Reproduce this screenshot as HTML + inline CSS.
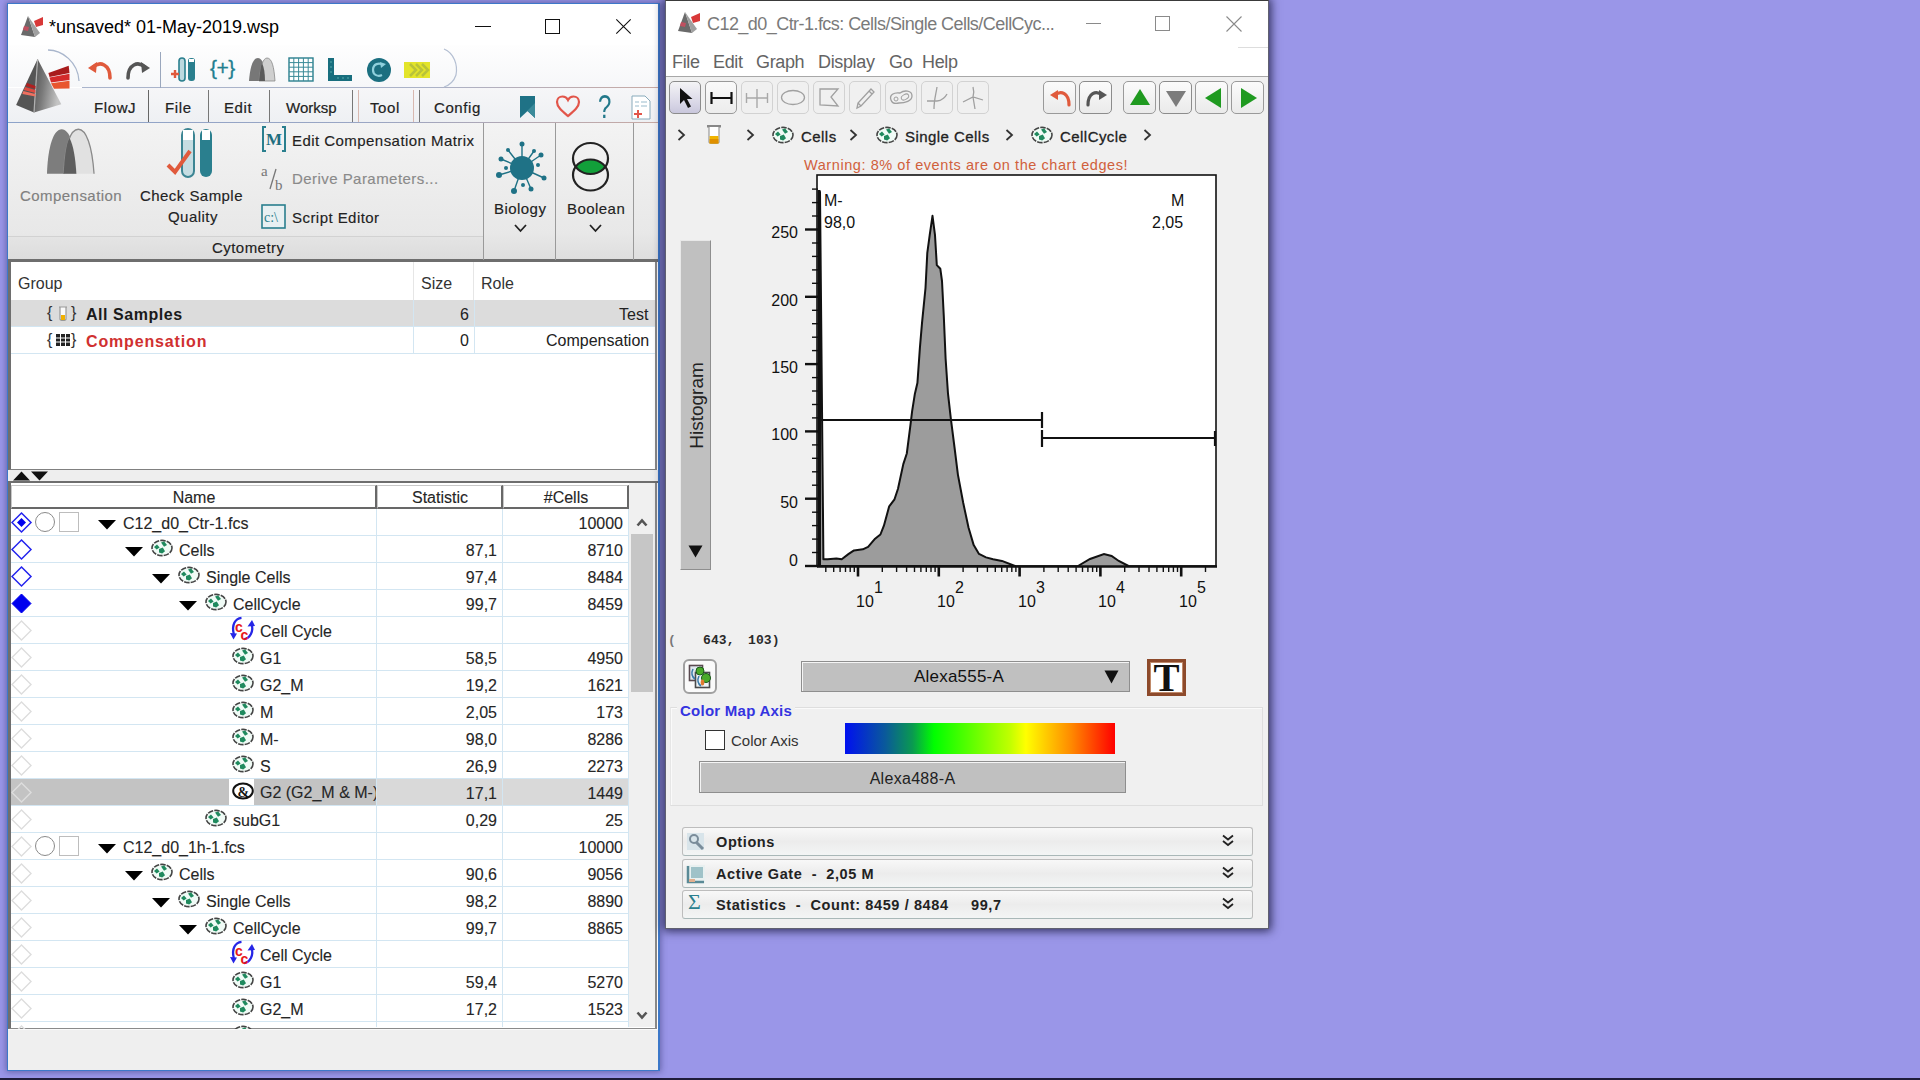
<!DOCTYPE html>
<html><head><meta charset="utf-8">
<style>
*{box-sizing:border-box;margin:0;padding:0}
html,body{width:1920px;height:1080px;overflow:hidden}
body{background:#9a96e8;font-family:"Liberation Sans",sans-serif;position:relative;color:#1e1e1e}
.a{position:absolute}
.t{position:absolute;white-space:nowrap;line-height:1}
svg{position:absolute;overflow:visible}
#taskbar{left:0;top:1078px;width:1920px;height:2px;background:#1f1d3a}
#lw{left:7px;top:3px;width:653px;height:1068px;border:1px solid #3d78c9;border-right-width:2px;background:#fff;box-shadow:0 0 6px 1px rgba(40,40,90,.45)}
#rw{left:665px;top:0px;width:604px;height:929px;border:1px solid #606070;border-top-color:#3a3a3a;background:#f0f0f0;box-shadow:0 0 9px 2px rgba(20,20,55,.8)}
.tb{font-size:18px;color:#000}
.tab{font-size:15px;color:#222;top:100px;letter-spacing:0.6px;-webkit-text-stroke:0.2px #222}
.rib{font-size:15px;color:#222;letter-spacing:0.45px;-webkit-text-stroke:0.15px currentColor}
.gh{font-size:16px;color:#333}
.row{position:absolute;left:11px;width:617px;height:27px;border-bottom:1px solid #d3e6f2}
.nm{font-size:16px;color:#262626;-webkit-text-stroke:0.12px #262626}
.num{font-size:16px;color:#262626;text-align:right;-webkit-text-stroke:0.12px #262626}
.rm{font-size:18px;color:#646464;letter-spacing:-0.35px}
.bc{font-size:15px;color:#222;letter-spacing:0.45px;-webkit-text-stroke:0.3px #222}
.ax{font-size:16px;color:#111}
.mono{font-family:'Liberation Mono',monospace;font-size:13px;color:#2a2a2a;font-weight:bold;letter-spacing:0.1px}
</style></head><body>
<div id="taskbar" class="a"></div>

<!-- ============ LEFT WINDOW ============ -->
<div id="lw" class="a"></div>
<!-- title bar -->
<svg style="left:21px;top:15px" width="24" height="22" viewBox="0 0 24 22">
 <g style="filter:blur(0.35px)"><polygon points="7,1 0,20 14,22" fill="#6a6a6a"/><polygon points="7,1 14,22 19,18" fill="#a0a0a0"/>
 <polygon points="13,6 22,2 22,10 15,12" fill="#d83838"/><polygon points="3,11 8,12 7,16 2,15" fill="#c05060"/></g>
</svg>
<div class="t tb" style="left:49px;top:18px">*unsaved* 01-May-2019.wsp</div>
<div class="a" style="left:475px;top:26px;width:16px;height:1px;background:#111"></div>
<div class="a" style="left:545px;top:19px;width:15px;height:15px;border:1px solid #111"></div>
<svg style="left:616px;top:19px" width="15" height="15"><path d="M0.3,0.3 L14.7,14.7 M14.7,0.3 L0.3,14.7" stroke="#111" stroke-width="1.1"/></svg>

<!-- quick access bar -->
<div class="a" style="left:8px;top:45px;width:650px;height:42px;background:linear-gradient(#fefefe,#f6f7f9)"></div>
<div class="a" style="left:82px;top:87px;width:576px;height:1px;background:linear-gradient(90deg,#a9b4cc,#aab2c8 60%,#c8aaa4)"></div>
<div class="a" style="left:8px;top:88px;width:650px;height:34px;background:linear-gradient(#f6f6f8,#eef0f3)"></div>
<div class="a" style="left:8px;top:122px;width:650px;height:1px;background:linear-gradient(90deg,#8da3c9,#9aa6c4 55%,#c8aaa4)"></div>

<!-- big logo + quick access pill -->
<svg style="left:8px;top:45px" width="460" height="78" viewBox="0 0 460 78">
 <path d="M40,5 C54,5 70,17 71,36" stroke="#a9b6cc" stroke-width="1.3" fill="none"/>
 <path d="M436,4 C446,8 450,20 448,30 C446,36 442,40 436,42" stroke="#b4bfd2" stroke-width="1.2" fill="none"/>
</svg>
<svg style="left:8px;top:45px" width="80" height="80" viewBox="0 0 80 80">
 <defs><linearGradient id="pyr" x1="0" x2="1" y1="0" y2="0.3"><stop offset="0" stop-color="#505050"/><stop offset=".45" stop-color="#7a7a7a"/><stop offset="1" stop-color="#c4c4c4"/></linearGradient></defs>
 <polygon points="29.6,14 8.1,60 26,67.4" fill="#555"/>
 <polygon points="29.6,14 26,67.4 53.3,59.3" fill="url(#pyr)"/>
 <line x1="29.6" y1="14" x2="26" y2="67.4" stroke="#b0b0b0" stroke-width="1.2"/>
 <polygon points="40.4,28 60.7,20.7 61.5,28.1 41.5,31.9" fill="#a81c1c"/>
 <polygon points="41.5,32.6 61.5,28.8 61.5,35 43,37.5" fill="#d42a2a"/>
 <polygon points="43,38.2 61.5,35.7 61.5,43.5 46,43.7" fill="#e8552e"/>
 <polygon points="19,38 27.6,41 27.4,44 17.6,41" fill="#b02020"/>
 <polygon points="17.2,42 27.4,45 27.4,48 15.8,45" fill="#e04a40"/>
 <polygon points="15.4,46 27.4,49 27.4,51.5 14.3,49" fill="#f07060"/>
</svg>
<!-- undo / redo -->
<svg style="left:86px;top:58px" width="28" height="24" viewBox="0 0 28 24"><path d="M7,9 C14,3 24,6 24,20" stroke="#e05a3c" stroke-width="3.6" fill="none" stroke-linecap="round"/><polygon points="2,10 11,4 10,15" fill="#e05a3c"/></svg>
<svg style="left:124px;top:58px" width="28" height="24" viewBox="0 0 28 24"><path d="M21,9 C14,3 4,6 4,20" stroke="#555" stroke-width="3.6" fill="none" stroke-linecap="round"/><polygon points="26,10 17,4 18,15" fill="#555"/></svg>
<div class="a" style="left:160px;top:52px;width:1px;height:36px;background:#9aa7bd"></div>
<!-- toolbar icons -->
<svg style="left:170px;top:57px" width="28" height="26" viewBox="0 0 28 26"><rect x="9" y="1" width="6" height="23" rx="3" fill="#bcd9df" stroke="#2a7f8e" stroke-width="1.6"/><rect x="18" y="1" width="7" height="23" rx="3" fill="#2a7f8e"/><rect x="19" y="2" width="5" height="3" fill="#fff"/><path d="M1,17 H9 M5,13 V21" stroke="#e05a3c" stroke-width="2.4"/></svg>
<div class="t" style="left:210px;top:57px;font-size:21px;color:#1f7f90;letter-spacing:-0.5px;-webkit-text-stroke:0.3px #1f7f90">{+}</div>
<svg style="left:248px;top:57px" width="28" height="25" viewBox="0 0 28 25"><path d="M1,24 C2,10 5,1 10,1 C15,1 17,10 17,24Z" fill="#777"/><path d="M11,24 C12,10 15,1 19,1 C24,1 26,10 27,24Z" fill="#cfcfcf" stroke="#888" stroke-width="0.8"/><path d="M11,24 C12,14 13,8 14,6 C16,10 17,16 17,24Z" fill="#5b5b5b"/></svg>
<svg style="left:288px;top:57px" width="26" height="25" viewBox="0 0 26 25"><rect x="1" y="1" width="24" height="23" fill="#fff" stroke="#2a7f8e" stroke-width="1.4"/><path d="M1,5.6 H25 M1,10.2 H25 M1,14.8 H25 M1,19.4 H25 M5.8,1 V24 M10.6,1 V24 M15.4,1 V24 M20.2,1 V24" stroke="#3a8a98" stroke-width="1"/></svg>
<svg style="left:327px;top:57px" width="26" height="25" viewBox="0 0 26 25"><path d="M1,1 H7 V18 H25 V24 H1Z" fill="#186e7e"/><path d="M4,4 V6 M4,9 V11 M4,14 V16 M10,21 H12 M15,21 H17 M20,21 H22" stroke="#5aa" stroke-width="1"/></svg>
<svg style="left:366px;top:57px" width="26" height="26" viewBox="0 0 26 26"><circle cx="13" cy="13" r="12" fill="#1b6f80"/><path d="M17,8 C13,5 7,7 7,13 C7,18 12,20 16,18" stroke="#8fd0dc" stroke-width="2.2" fill="none"/><polygon points="14,5 20,7 15,11" fill="#8fd0dc"/></svg>
<svg style="left:404px;top:61px" width="28" height="18" viewBox="0 0 28 18"><rect x="0" y="1" width="26" height="16" fill="#e3e42a"/><path d="M6,3 L12,9 L6,15 M12,3 L18,9 L12,15 M18,3 L24,9 L18,15" stroke="#b9c33a" stroke-width="2.5" fill="none"/></svg>

<!-- tabs -->
<div class="t tab" style="left:94px">FlowJ</div>
<div class="a" style="left:148px;top:90px;width:1px;height:32px;background:#666"></div>
<div class="t tab" style="left:165px">File</div>
<div class="a" style="left:208px;top:90px;width:1px;height:32px;background:#777"></div>
<div class="t tab" style="left:224px">Edit</div>
<div class="a" style="left:269px;top:90px;width:1px;height:32px;background:#777"></div>
<div class="t tab" style="left:286px;letter-spacing:0">Worksp</div>
<div class="a" style="left:352px;top:90px;width:1px;height:32px;background:#777"></div>
<div class="a" style="left:358px;top:90px;width:1px;height:32px;background:#d8b8b0"></div>
<div class="t tab" style="left:370px">Tool</div>
<div class="a" style="left:413px;top:90px;width:1px;height:32px;background:#d8b8b0"></div>
<div class="a" style="left:419px;top:90px;width:1px;height:32px;background:#777"></div>
<div class="t tab" style="left:434px">Config</div>
<svg style="left:519px;top:95px" width="18" height="24" viewBox="0 0 18 24"><polygon points="1,1 16,1 16,23 8.5,16 1,23" fill="#1f7286"/><polygon points="1,23 16,8 16,23 8.5,16" fill="#3b8a9a"/></svg>
<svg style="left:555px;top:95px" width="26" height="24" viewBox="0 0 26 24"><path d="M13,21 C7,16 2,12 2,7 C2,3.5 4.5,1.5 7.5,1.5 C10,1.5 12,3 13,5 C14,3 16,1.5 18.5,1.5 C21.5,1.5 24,3.5 24,7 C24,12 19,16 13,21Z" fill="none" stroke="#e2554a" stroke-width="2.2"/></svg>
<div class="t" style="left:598px;top:90px;font-size:30px;color:#22788a;transform:scale(0.8,1.12);transform-origin:0 0">?</div>
<svg style="left:630px;top:95px" width="22" height="26" viewBox="0 0 22 26"><path d="M2,1 H15 L20,6 V24 H2Z" fill="#fff" stroke="#8ab" stroke-width="1"/><path d="M5,7 H9 M11,7 H17 M5,11 H9 M11,11 H17" stroke="#9bc" stroke-width="1"/><path d="M4,19 H12 M8,15 V23" stroke="#e2554a" stroke-width="2"/></svg>

<!-- ribbon body -->
<div class="a" style="left:8px;top:123px;width:650px;height:137px;background:linear-gradient(#f3f3f3,#e8e8e8 80%,#dedede)"></div>
<div class="a" style="left:8px;top:236px;width:475px;height:1px;background:#d2d2d2"></div>
<div class="a" style="left:8px;top:237px;width:475px;height:23px;background:linear-gradient(#e4e4e4,#dcdcdc)"></div>
<div class="a" style="left:8px;top:123px;width:650px;height:137px;background:transparent"></div>
<div class="a" style="left:8px;top:259px;width:650px;height:3px;background:#6e6e6e"></div>
<div class="a" style="left:483px;top:123px;width:1px;height:137px;background:#9a9a9a"></div>
<div class="a" style="left:555px;top:123px;width:1px;height:137px;background:#9a9a9a"></div>
<div class="a" style="left:633px;top:123px;width:1px;height:137px;background:#9a9a9a"></div>
<!-- compensation -->
<svg style="left:45px;top:128px" width="51" height="47" viewBox="0 0 52 38" preserveAspectRatio="none"><path d="M2,37 C3,14 9,1 17,1 C25,1 31,14 32,37Z" fill="#7d7d7d"/><path d="M19,37 C20,14 26,1 34,1 C42,1 48,14 50,37" fill="#e1e1e1" stroke="#8a8a8a" stroke-width="1.3"/><path d="M19,37 C20,22 22,12 25,8 C29,14 31,24 32,37Z" fill="#5e5e5e"/></svg>
<div class="t rib" style="left:20px;top:188px;color:#808080">Compensation</div>
<!-- check sample quality -->
<svg style="left:166px;top:127px" width="50" height="54" viewBox="0 0 50 54"><rect x="16" y="2" width="12" height="48" rx="6" fill="#c6dde2" stroke="#3c8593" stroke-width="2"/><rect x="17" y="3" width="10" height="10" fill="#fff"/><rect x="34" y="2" width="12" height="48" rx="6" fill="#2a7f8e"/><rect x="36" y="3" width="8" height="10" fill="#fff"/><path d="M2,38 L9,45 L24,24" stroke="#e05a3c" stroke-width="4" fill="none"/></svg>
<div class="t rib" style="left:140px;top:188px">Check Sample</div>
<div class="t rib" style="left:168px;top:209px">Quality</div>
<!-- small buttons -->
<svg style="left:261px;top:126px" width="26" height="26" viewBox="0 0 26 26"><path d="M5,1 H2 V25 H5 M21,1 H24 V25 H21" stroke="#2a7f8e" stroke-width="2" fill="none"/><text x="13" y="19" text-anchor="middle" font-family="Liberation Serif" font-weight="bold" font-size="17" fill="#1f6f80">M</text></svg>
<div class="t rib" style="left:292px;top:133px">Edit Compensation Matrix</div>
<svg style="left:260px;top:163px" width="28" height="30" viewBox="0 0 28 30"><text x="1" y="13" font-family="Liberation Serif" font-size="15" fill="#777">a</text><path d="M16,6 L10,26" stroke="#777" stroke-width="1.3"/><text x="15" y="27" font-family="Liberation Serif" font-size="15" fill="#777">b</text></svg>
<div class="t rib" style="left:292px;top:171px;color:#8a8a8a">Derive Parameters...</div>
<svg style="left:261px;top:204px" width="26" height="26" viewBox="0 0 26 26"><rect x="1" y="1" width="23" height="23" fill="#e8f0f2" stroke="#2a7f8e" stroke-width="1.6"/><text x="3" y="18" font-family="Liberation Serif" font-size="14" fill="#2a7f8e">c:\</text></svg>
<div class="t rib" style="left:292px;top:210px">Script Editor</div>
<div class="t rib" style="left:212px;top:240px">Cytometry</div>
<!-- biology -->
<svg style="left:494px;top:141px" width="56" height="54" viewBox="0 0 56 54">
 <g stroke="#1f7286" stroke-width="1.4">
 <path d="M28,27 L28,3 M28,27 L7,18 M28,27 L47,14 M28,27 L5,34 M28,27 L50,37 M28,27 L20,50 M28,27 L37,48 M28,27 L40,10 M28,27 L14,9"/></g>
 <g fill="#1f7286"><circle cx="28" cy="27" r="12"/><circle cx="28" cy="3" r="2.5"/><circle cx="7" cy="18" r="2.5"/><circle cx="47" cy="14" r="2.5"/><circle cx="5" cy="34" r="3"/><circle cx="50" cy="37" r="2.5"/><circle cx="20" cy="50" r="3"/><circle cx="37" cy="48" r="2.5"/><circle cx="40" cy="10" r="2"/><circle cx="14" cy="9" r="2"/><circle cx="44" cy="24" r="2"/><circle cx="12" cy="27" r="2"/><circle cx="29" cy="44" r="2"/></g>
</svg>
<div class="t rib" style="left:494px;top:201px">Biology</div>
<svg style="left:514px;top:224px" width="13" height="9"><path d="M1,1 L6.5,7 L12,1" stroke="#222" stroke-width="1.8" fill="none"/></svg>
<!-- boolean -->
<svg style="left:569px;top:141px" width="44" height="52" viewBox="0 0 44 52"><path d="M6.7,25.75 A17.5,15.5 0 0 1 36.3,25.75 A17.5,15.5 0 0 1 6.7,25.75Z" fill="#12a03a"/><ellipse cx="21.5" cy="17.5" rx="17.5" ry="15.5" fill="none" stroke="#222" stroke-width="2.2"/><ellipse cx="21.5" cy="34" rx="17.5" ry="15.5" fill="none" stroke="#222" stroke-width="2.2"/></svg>
<div class="t rib" style="left:567px;top:201px">Boolean</div>
<svg style="left:589px;top:224px" width="13" height="9"><path d="M1,1 L6.5,7 L12,1" stroke="#222" stroke-width="1.8" fill="none"/></svg>


<!-- group table -->
<div class="a" style="left:8px;top:262px;width:649px;height:208px;background:#fff;border-left:3px solid #6e6e6e;border-right:2px solid #888;border-bottom:1px solid #808080"></div>
<div class="a" style="left:11px;top:300px;width:644px;height:26px;background:#dcdcdc"></div>
<div class="a" style="left:11px;top:326px;width:644px;height:1px;background:#d3e6f2"></div>
<div class="a" style="left:11px;top:353px;width:644px;height:1px;background:#d3e6f2"></div>
<div class="a" style="left:413px;top:262px;width:1px;height:38px;background:#e6e6e6"></div>
<div class="a" style="left:473px;top:262px;width:1px;height:38px;background:#e6e6e6"></div>
<div class="a" style="left:413px;top:300px;width:1px;height:53px;background:#d3e6f2"></div>
<div class="a" style="left:474px;top:300px;width:1px;height:53px;background:#d3e6f2"></div>
<div class="t gh" style="left:18px;top:276px">Group</div>
<div class="t gh" style="left:421px;top:276px">Size</div>
<div class="t gh" style="left:481px;top:276px">Role</div>
<div class="t gh" style="left:47px;top:305px;color:#333">{</div>
<svg style="left:57px;top:306px" width="12" height="16" viewBox="0 0 12 16"><path d="M2,1 H10 M3,1 V13 C3,15 9,15 9,13 V1" stroke="#999" stroke-width="1.2" fill="#fafafa"/><rect x="4" y="9" width="4" height="5" fill="#f0b000"/></svg>
<div class="t gh" style="left:71px;top:305px;color:#333">}</div>
<div class="t" style="left:86px;top:307px;font-size:16px;font-weight:bold;color:#1a1a1a;letter-spacing:0.55px">All Samples</div>
<div class="t gh" style="left:460px;top:307px;color:#222">6</div>
<div class="t gh" style="left:619px;top:307px;color:#222">Test</div>
<div class="t gh" style="left:47px;top:332px;color:#333">{</div>
<svg style="left:55px;top:333px" width="16" height="14" viewBox="0 0 16 14"><rect x="1" y="1" width="14" height="12" fill="#222"/><path d="M1,5 H15 M1,9 H15 M5.5,1 V13 M10.5,1 V13" stroke="#fff" stroke-width="1"/></svg>
<div class="t gh" style="left:71px;top:332px;color:#333">}</div>
<div class="t" style="left:86px;top:334px;font-size:16px;font-weight:bold;color:#d03030;letter-spacing:0.85px">Compensation</div>
<div class="t gh" style="left:460px;top:333px;color:#222">0</div>
<div class="t gh" style="left:546px;top:333px;color:#222">Compensation</div>

<!-- splitter -->
<div class="a" style="left:8px;top:470px;width:650px;height:11px;background:#eeeeee"></div>
<svg style="left:13px;top:471px" width="36" height="10" viewBox="0 0 36 10"><polygon points="0,9.5 8.5,0.5 17,9.5" fill="#111"/><polygon points="18,0.5 35,0.5 26.5,9.5" fill="#111"/></svg>
<div class="a" style="left:8px;top:481px;width:650px;height:2px;background:#6e6e6e"></div>

<!-- tree table -->
<div class="a" style="left:8px;top:483px;width:649px;height:546px;background:#fff;border-left:3px solid #6e6e6e;border-right:2px solid #888;border-bottom:1px solid #8a8a8a"></div>

<div class="a hdr" style="left:11px;top:485px;width:366px;height:24px;border-left:1px solid #c8c8c8;border-top:1px solid #c8c8c8;border-right:2px solid #686868;border-bottom:2px solid #686868"></div>
<div class="t nm" style="left:11px;width:366px;text-align:center;top:490px">Name</div>
<div class="a hdr" style="left:377px;top:485px;width:126px;height:24px;border-left:1px solid #c8c8c8;border-top:1px solid #c8c8c8;border-right:2px solid #686868;border-bottom:2px solid #686868"></div>
<div class="t nm" style="left:377px;width:126px;text-align:center;top:490px">Statistic</div>
<div class="a hdr" style="left:503px;top:485px;width:126px;height:24px;border-left:1px solid #c8c8c8;border-top:1px solid #c8c8c8;border-right:2px solid #686868;border-bottom:2px solid #686868"></div>
<div class="t nm" style="left:503px;width:126px;text-align:center;top:490px">#Cells</div>
<div class="a" style="left:11px;top:535px;width:617px;height:1px;background:#d3e6f2"></div>
<svg style="left:11px;top:512px" width="21" height="21" viewBox="0 0 21 21"><polygon points="10.5,1 20,10.5 10.5,20 1,10.5" fill="#fff" stroke="#2424ee" stroke-width="1.5"/><polygon points="10.5,6 15,10.5 10.5,15 6,10.5" fill="#0000ee"/></svg>
<div class="a" style="left:35px;top:512px;width:20px;height:20px;border:1.5px solid #8a8a8a;border-radius:50%"></div>
<div class="a" style="left:59px;top:512px;width:20px;height:20px;border:1px solid #bdbdbd"></div>
<svg style="left:98px;top:520px" width="18" height="10" viewBox="0 0 18 10"><polygon points="0,0 18,0 9,9.5" fill="#000"/></svg>
<div class="t nm" style="left:123px;top:516px">C12_d0_Ctr-1.fcs</div>
<div class="t num" style="left:503px;width:120px;top:516px">10000</div>
<div class="a" style="left:11px;top:562px;width:617px;height:1px;background:#d3e6f2"></div>
<svg style="left:11px;top:539px" width="21" height="21" viewBox="0 0 21 21"><polygon points="10.5,1 20,10.5 10.5,20 1,10.5" fill="#fff" stroke="#2424ee" stroke-width="1.5"/></svg>
<svg style="left:125px;top:547px" width="18" height="10" viewBox="0 0 18 10"><polygon points="0,0 18,0 9,9.5" fill="#000"/></svg>
<svg style="left:151px;top:539px" width="22" height="18" viewBox="0 0 22 18"><ellipse cx="11" cy="9" rx="10" ry="7.6" fill="#f0fbf6" stroke="#444" stroke-width="1.6" stroke-dasharray="5.5 1.1"/><path d="M3,8 L6,5.6 L8.6,8.4 L5.6,10.6Z" fill="#1f8a5e"/><path d="M10,3.4 L13.2,2.4 L16,6 L13,7.8Z" fill="#1f8a5e"/><path d="M8,10 L11.8,8.4 L14,12.2 L11.2,14.6 L8,13.4Z" fill="#1f8a5e"/></svg>
<div class="t nm" style="left:179px;top:543px">Cells</div>
<div class="t num" style="left:377px;width:120px;top:543px">87,1</div>
<div class="t num" style="left:503px;width:120px;top:543px">8710</div>
<div class="a" style="left:11px;top:589px;width:617px;height:1px;background:#d3e6f2"></div>
<svg style="left:11px;top:566px" width="21" height="21" viewBox="0 0 21 21"><polygon points="10.5,1 20,10.5 10.5,20 1,10.5" fill="#fff" stroke="#2424ee" stroke-width="1.5"/></svg>
<svg style="left:152px;top:574px" width="18" height="10" viewBox="0 0 18 10"><polygon points="0,0 18,0 9,9.5" fill="#000"/></svg>
<svg style="left:178px;top:566px" width="22" height="18" viewBox="0 0 22 18"><ellipse cx="11" cy="9" rx="10" ry="7.6" fill="#f0fbf6" stroke="#444" stroke-width="1.6" stroke-dasharray="5.5 1.1"/><path d="M3,8 L6,5.6 L8.6,8.4 L5.6,10.6Z" fill="#1f8a5e"/><path d="M10,3.4 L13.2,2.4 L16,6 L13,7.8Z" fill="#1f8a5e"/><path d="M8,10 L11.8,8.4 L14,12.2 L11.2,14.6 L8,13.4Z" fill="#1f8a5e"/></svg>
<div class="t nm" style="left:206px;top:570px">Single Cells</div>
<div class="t num" style="left:377px;width:120px;top:570px">97,4</div>
<div class="t num" style="left:503px;width:120px;top:570px">8484</div>
<div class="a" style="left:11px;top:616px;width:617px;height:1px;background:#d3e6f2"></div>
<svg style="left:11px;top:593px" width="21" height="21" viewBox="0 0 21 21"><polygon points="10.5,1 20,10.5 10.5,20 1,10.5" fill="#0000ee" stroke="#0000ee" stroke-width="1"/></svg>
<svg style="left:179px;top:601px" width="18" height="10" viewBox="0 0 18 10"><polygon points="0,0 18,0 9,9.5" fill="#000"/></svg>
<svg style="left:205px;top:593px" width="22" height="18" viewBox="0 0 22 18"><ellipse cx="11" cy="9" rx="10" ry="7.6" fill="#f0fbf6" stroke="#444" stroke-width="1.6" stroke-dasharray="5.5 1.1"/><path d="M3,8 L6,5.6 L8.6,8.4 L5.6,10.6Z" fill="#1f8a5e"/><path d="M10,3.4 L13.2,2.4 L16,6 L13,7.8Z" fill="#1f8a5e"/><path d="M8,10 L11.8,8.4 L14,12.2 L11.2,14.6 L8,13.4Z" fill="#1f8a5e"/></svg>
<div class="t nm" style="left:233px;top:597px">CellCycle</div>
<div class="t num" style="left:377px;width:120px;top:597px">99,7</div>
<div class="t num" style="left:503px;width:120px;top:597px">8459</div>
<div class="a" style="left:11px;top:643px;width:617px;height:1px;background:#d3e6f2"></div>
<svg style="left:11px;top:620px" width="21" height="21" viewBox="0 0 21 21"><polygon points="10.5,1 20,10.5 10.5,20 1,10.5" fill="none" stroke="#dddddd" stroke-width="1.4"/></svg>
<svg style="left:230px;top:616px" width="25" height="25" viewBox="0 0 25 25"><path d="M11.5,1.8 C5,2.5 1.5,9 3.8,18" stroke="#2626e6" stroke-width="2.3" fill="none"/><polygon points="0,17 7,17.5 3.5,23.5" fill="#2626e6"/><path d="M14,23.2 C20,22.5 24,15 21.5,8" stroke="#2626e6" stroke-width="2.3" fill="none"/><polygon points="17.5,10.5 25,10 22,4" fill="#2626e6"/><text x="5" y="15.5" font-family="Liberation Sans" font-weight="bold" font-size="14" fill="#e81818">c</text><text x="10.5" y="23.5" font-family="Liberation Sans" font-weight="bold" font-size="14" fill="#e81818">c</text></svg>
<div class="t nm" style="left:260px;top:624px">Cell Cycle</div>
<div class="a" style="left:11px;top:670px;width:617px;height:1px;background:#d3e6f2"></div>
<svg style="left:11px;top:647px" width="21" height="21" viewBox="0 0 21 21"><polygon points="10.5,1 20,10.5 10.5,20 1,10.5" fill="none" stroke="#dddddd" stroke-width="1.4"/></svg>
<svg style="left:232px;top:647px" width="22" height="18" viewBox="0 0 22 18"><ellipse cx="11" cy="9" rx="10" ry="7.6" fill="#f0fbf6" stroke="#444" stroke-width="1.6" stroke-dasharray="5.5 1.1"/><path d="M3,8 L6,5.6 L8.6,8.4 L5.6,10.6Z" fill="#1f8a5e"/><path d="M10,3.4 L13.2,2.4 L16,6 L13,7.8Z" fill="#1f8a5e"/><path d="M8,10 L11.8,8.4 L14,12.2 L11.2,14.6 L8,13.4Z" fill="#1f8a5e"/></svg>
<div class="t nm" style="left:260px;top:651px">G1</div>
<div class="t num" style="left:377px;width:120px;top:651px">58,5</div>
<div class="t num" style="left:503px;width:120px;top:651px">4950</div>
<div class="a" style="left:11px;top:697px;width:617px;height:1px;background:#d3e6f2"></div>
<svg style="left:11px;top:674px" width="21" height="21" viewBox="0 0 21 21"><polygon points="10.5,1 20,10.5 10.5,20 1,10.5" fill="none" stroke="#dddddd" stroke-width="1.4"/></svg>
<svg style="left:232px;top:674px" width="22" height="18" viewBox="0 0 22 18"><ellipse cx="11" cy="9" rx="10" ry="7.6" fill="#f0fbf6" stroke="#444" stroke-width="1.6" stroke-dasharray="5.5 1.1"/><path d="M3,8 L6,5.6 L8.6,8.4 L5.6,10.6Z" fill="#1f8a5e"/><path d="M10,3.4 L13.2,2.4 L16,6 L13,7.8Z" fill="#1f8a5e"/><path d="M8,10 L11.8,8.4 L14,12.2 L11.2,14.6 L8,13.4Z" fill="#1f8a5e"/></svg>
<div class="t nm" style="left:260px;top:678px">G2_M</div>
<div class="t num" style="left:377px;width:120px;top:678px">19,2</div>
<div class="t num" style="left:503px;width:120px;top:678px">1621</div>
<div class="a" style="left:11px;top:724px;width:617px;height:1px;background:#d3e6f2"></div>
<svg style="left:11px;top:701px" width="21" height="21" viewBox="0 0 21 21"><polygon points="10.5,1 20,10.5 10.5,20 1,10.5" fill="none" stroke="#dddddd" stroke-width="1.4"/></svg>
<svg style="left:232px;top:701px" width="22" height="18" viewBox="0 0 22 18"><ellipse cx="11" cy="9" rx="10" ry="7.6" fill="#f0fbf6" stroke="#444" stroke-width="1.6" stroke-dasharray="5.5 1.1"/><path d="M3,8 L6,5.6 L8.6,8.4 L5.6,10.6Z" fill="#1f8a5e"/><path d="M10,3.4 L13.2,2.4 L16,6 L13,7.8Z" fill="#1f8a5e"/><path d="M8,10 L11.8,8.4 L14,12.2 L11.2,14.6 L8,13.4Z" fill="#1f8a5e"/></svg>
<div class="t nm" style="left:260px;top:705px">M</div>
<div class="t num" style="left:377px;width:120px;top:705px">2,05</div>
<div class="t num" style="left:503px;width:120px;top:705px">173</div>
<div class="a" style="left:11px;top:751px;width:617px;height:1px;background:#d3e6f2"></div>
<svg style="left:11px;top:728px" width="21" height="21" viewBox="0 0 21 21"><polygon points="10.5,1 20,10.5 10.5,20 1,10.5" fill="none" stroke="#dddddd" stroke-width="1.4"/></svg>
<svg style="left:232px;top:728px" width="22" height="18" viewBox="0 0 22 18"><ellipse cx="11" cy="9" rx="10" ry="7.6" fill="#f0fbf6" stroke="#444" stroke-width="1.6" stroke-dasharray="5.5 1.1"/><path d="M3,8 L6,5.6 L8.6,8.4 L5.6,10.6Z" fill="#1f8a5e"/><path d="M10,3.4 L13.2,2.4 L16,6 L13,7.8Z" fill="#1f8a5e"/><path d="M8,10 L11.8,8.4 L14,12.2 L11.2,14.6 L8,13.4Z" fill="#1f8a5e"/></svg>
<div class="t nm" style="left:260px;top:732px">M-</div>
<div class="t num" style="left:377px;width:120px;top:732px">98,0</div>
<div class="t num" style="left:503px;width:120px;top:732px">8286</div>
<div class="a" style="left:11px;top:778px;width:617px;height:1px;background:#d3e6f2"></div>
<svg style="left:11px;top:755px" width="21" height="21" viewBox="0 0 21 21"><polygon points="10.5,1 20,10.5 10.5,20 1,10.5" fill="none" stroke="#dddddd" stroke-width="1.4"/></svg>
<svg style="left:232px;top:755px" width="22" height="18" viewBox="0 0 22 18"><ellipse cx="11" cy="9" rx="10" ry="7.6" fill="#f0fbf6" stroke="#444" stroke-width="1.6" stroke-dasharray="5.5 1.1"/><path d="M3,8 L6,5.6 L8.6,8.4 L5.6,10.6Z" fill="#1f8a5e"/><path d="M10,3.4 L13.2,2.4 L16,6 L13,7.8Z" fill="#1f8a5e"/><path d="M8,10 L11.8,8.4 L14,12.2 L11.2,14.6 L8,13.4Z" fill="#1f8a5e"/></svg>
<div class="t nm" style="left:260px;top:759px">S</div>
<div class="t num" style="left:377px;width:120px;top:759px">26,9</div>
<div class="t num" style="left:503px;width:120px;top:759px">2273</div>
<div class="a" style="left:11px;top:779px;width:218px;height:26px;background:#c3c3c3"></div>
<div class="a" style="left:229px;top:779px;width:25px;height:26px;background:#fff"></div>
<div class="a" style="left:254px;top:779px;width:122px;height:26px;background:#c3c3c3"></div>
<div class="a" style="left:377px;top:779px;width:251px;height:26px;background:#d9d9d9"></div>
<div class="a" style="left:11px;top:805px;width:617px;height:1px;background:#d3e6f2"></div>
<svg style="left:11px;top:782px" width="21" height="21" viewBox="0 0 21 21"><polygon points="10.5,1 20,10.5 10.5,20 1,10.5" fill="none" stroke="#dddddd" stroke-width="1.4"/></svg>
<svg style="left:232px;top:782px" width="22" height="18" viewBox="0 0 22 18"><ellipse cx="11" cy="9" rx="9.8" ry="7.6" fill="#fff" stroke="#111" stroke-width="2"/><text x="5.5" y="14.5" font-family="Liberation Serif" font-weight="bold" font-size="14" fill="#111">&amp;</text></svg>
<div class="t nm" style="left:260px;top:783px;width:116px;overflow:hidden;line-height:1.2">G2 (G2_M &amp; M-)</div>
<div class="t num" style="left:377px;width:120px;top:786px">17,1</div>
<div class="t num" style="left:503px;width:120px;top:786px">1449</div>
<div class="a" style="left:11px;top:832px;width:617px;height:1px;background:#d3e6f2"></div>
<svg style="left:11px;top:809px" width="21" height="21" viewBox="0 0 21 21"><polygon points="10.5,1 20,10.5 10.5,20 1,10.5" fill="none" stroke="#dddddd" stroke-width="1.4"/></svg>
<svg style="left:205px;top:809px" width="22" height="18" viewBox="0 0 22 18"><ellipse cx="11" cy="9" rx="10" ry="7.6" fill="#f0fbf6" stroke="#444" stroke-width="1.6" stroke-dasharray="5.5 1.1"/><path d="M3,8 L6,5.6 L8.6,8.4 L5.6,10.6Z" fill="#1f8a5e"/><path d="M10,3.4 L13.2,2.4 L16,6 L13,7.8Z" fill="#1f8a5e"/><path d="M8,10 L11.8,8.4 L14,12.2 L11.2,14.6 L8,13.4Z" fill="#1f8a5e"/></svg>
<div class="t nm" style="left:233px;top:813px">subG1</div>
<div class="t num" style="left:377px;width:120px;top:813px">0,29</div>
<div class="t num" style="left:503px;width:120px;top:813px">25</div>
<div class="a" style="left:11px;top:859px;width:617px;height:1px;background:#d3e6f2"></div>
<svg style="left:11px;top:836px" width="21" height="21" viewBox="0 0 21 21"><polygon points="10.5,1 20,10.5 10.5,20 1,10.5" fill="none" stroke="#dddddd" stroke-width="1.4"/></svg>
<div class="a" style="left:35px;top:836px;width:20px;height:20px;border:1.5px solid #8a8a8a;border-radius:50%"></div>
<div class="a" style="left:59px;top:836px;width:20px;height:20px;border:1px solid #bdbdbd"></div>
<svg style="left:98px;top:844px" width="18" height="10" viewBox="0 0 18 10"><polygon points="0,0 18,0 9,9.5" fill="#000"/></svg>
<div class="t nm" style="left:123px;top:840px">C12_d0_1h-1.fcs</div>
<div class="t num" style="left:503px;width:120px;top:840px">10000</div>
<div class="a" style="left:11px;top:886px;width:617px;height:1px;background:#d3e6f2"></div>
<svg style="left:11px;top:863px" width="21" height="21" viewBox="0 0 21 21"><polygon points="10.5,1 20,10.5 10.5,20 1,10.5" fill="none" stroke="#dddddd" stroke-width="1.4"/></svg>
<svg style="left:125px;top:871px" width="18" height="10" viewBox="0 0 18 10"><polygon points="0,0 18,0 9,9.5" fill="#000"/></svg>
<svg style="left:151px;top:863px" width="22" height="18" viewBox="0 0 22 18"><ellipse cx="11" cy="9" rx="10" ry="7.6" fill="#f0fbf6" stroke="#444" stroke-width="1.6" stroke-dasharray="5.5 1.1"/><path d="M3,8 L6,5.6 L8.6,8.4 L5.6,10.6Z" fill="#1f8a5e"/><path d="M10,3.4 L13.2,2.4 L16,6 L13,7.8Z" fill="#1f8a5e"/><path d="M8,10 L11.8,8.4 L14,12.2 L11.2,14.6 L8,13.4Z" fill="#1f8a5e"/></svg>
<div class="t nm" style="left:179px;top:867px">Cells</div>
<div class="t num" style="left:377px;width:120px;top:867px">90,6</div>
<div class="t num" style="left:503px;width:120px;top:867px">9056</div>
<div class="a" style="left:11px;top:913px;width:617px;height:1px;background:#d3e6f2"></div>
<svg style="left:11px;top:890px" width="21" height="21" viewBox="0 0 21 21"><polygon points="10.5,1 20,10.5 10.5,20 1,10.5" fill="none" stroke="#dddddd" stroke-width="1.4"/></svg>
<svg style="left:152px;top:898px" width="18" height="10" viewBox="0 0 18 10"><polygon points="0,0 18,0 9,9.5" fill="#000"/></svg>
<svg style="left:178px;top:890px" width="22" height="18" viewBox="0 0 22 18"><ellipse cx="11" cy="9" rx="10" ry="7.6" fill="#f0fbf6" stroke="#444" stroke-width="1.6" stroke-dasharray="5.5 1.1"/><path d="M3,8 L6,5.6 L8.6,8.4 L5.6,10.6Z" fill="#1f8a5e"/><path d="M10,3.4 L13.2,2.4 L16,6 L13,7.8Z" fill="#1f8a5e"/><path d="M8,10 L11.8,8.4 L14,12.2 L11.2,14.6 L8,13.4Z" fill="#1f8a5e"/></svg>
<div class="t nm" style="left:206px;top:894px">Single Cells</div>
<div class="t num" style="left:377px;width:120px;top:894px">98,2</div>
<div class="t num" style="left:503px;width:120px;top:894px">8890</div>
<div class="a" style="left:11px;top:940px;width:617px;height:1px;background:#d3e6f2"></div>
<svg style="left:11px;top:917px" width="21" height="21" viewBox="0 0 21 21"><polygon points="10.5,1 20,10.5 10.5,20 1,10.5" fill="none" stroke="#dddddd" stroke-width="1.4"/></svg>
<svg style="left:179px;top:925px" width="18" height="10" viewBox="0 0 18 10"><polygon points="0,0 18,0 9,9.5" fill="#000"/></svg>
<svg style="left:205px;top:917px" width="22" height="18" viewBox="0 0 22 18"><ellipse cx="11" cy="9" rx="10" ry="7.6" fill="#f0fbf6" stroke="#444" stroke-width="1.6" stroke-dasharray="5.5 1.1"/><path d="M3,8 L6,5.6 L8.6,8.4 L5.6,10.6Z" fill="#1f8a5e"/><path d="M10,3.4 L13.2,2.4 L16,6 L13,7.8Z" fill="#1f8a5e"/><path d="M8,10 L11.8,8.4 L14,12.2 L11.2,14.6 L8,13.4Z" fill="#1f8a5e"/></svg>
<div class="t nm" style="left:233px;top:921px">CellCycle</div>
<div class="t num" style="left:377px;width:120px;top:921px">99,7</div>
<div class="t num" style="left:503px;width:120px;top:921px">8865</div>
<div class="a" style="left:11px;top:967px;width:617px;height:1px;background:#d3e6f2"></div>
<svg style="left:11px;top:944px" width="21" height="21" viewBox="0 0 21 21"><polygon points="10.5,1 20,10.5 10.5,20 1,10.5" fill="none" stroke="#dddddd" stroke-width="1.4"/></svg>
<svg style="left:230px;top:940px" width="25" height="25" viewBox="0 0 25 25"><path d="M11.5,1.8 C5,2.5 1.5,9 3.8,18" stroke="#2626e6" stroke-width="2.3" fill="none"/><polygon points="0,17 7,17.5 3.5,23.5" fill="#2626e6"/><path d="M14,23.2 C20,22.5 24,15 21.5,8" stroke="#2626e6" stroke-width="2.3" fill="none"/><polygon points="17.5,10.5 25,10 22,4" fill="#2626e6"/><text x="5" y="15.5" font-family="Liberation Sans" font-weight="bold" font-size="14" fill="#e81818">c</text><text x="10.5" y="23.5" font-family="Liberation Sans" font-weight="bold" font-size="14" fill="#e81818">c</text></svg>
<div class="t nm" style="left:260px;top:948px">Cell Cycle</div>
<div class="a" style="left:11px;top:994px;width:617px;height:1px;background:#d3e6f2"></div>
<svg style="left:11px;top:971px" width="21" height="21" viewBox="0 0 21 21"><polygon points="10.5,1 20,10.5 10.5,20 1,10.5" fill="none" stroke="#dddddd" stroke-width="1.4"/></svg>
<svg style="left:232px;top:971px" width="22" height="18" viewBox="0 0 22 18"><ellipse cx="11" cy="9" rx="10" ry="7.6" fill="#f0fbf6" stroke="#444" stroke-width="1.6" stroke-dasharray="5.5 1.1"/><path d="M3,8 L6,5.6 L8.6,8.4 L5.6,10.6Z" fill="#1f8a5e"/><path d="M10,3.4 L13.2,2.4 L16,6 L13,7.8Z" fill="#1f8a5e"/><path d="M8,10 L11.8,8.4 L14,12.2 L11.2,14.6 L8,13.4Z" fill="#1f8a5e"/></svg>
<div class="t nm" style="left:260px;top:975px">G1</div>
<div class="t num" style="left:377px;width:120px;top:975px">59,4</div>
<div class="t num" style="left:503px;width:120px;top:975px">5270</div>
<div class="a" style="left:11px;top:1021px;width:617px;height:1px;background:#d3e6f2"></div>
<svg style="left:11px;top:998px" width="21" height="21" viewBox="0 0 21 21"><polygon points="10.5,1 20,10.5 10.5,20 1,10.5" fill="none" stroke="#dddddd" stroke-width="1.4"/></svg>
<svg style="left:232px;top:998px" width="22" height="18" viewBox="0 0 22 18"><ellipse cx="11" cy="9" rx="10" ry="7.6" fill="#f0fbf6" stroke="#444" stroke-width="1.6" stroke-dasharray="5.5 1.1"/><path d="M3,8 L6,5.6 L8.6,8.4 L5.6,10.6Z" fill="#1f8a5e"/><path d="M10,3.4 L13.2,2.4 L16,6 L13,7.8Z" fill="#1f8a5e"/><path d="M8,10 L11.8,8.4 L14,12.2 L11.2,14.6 L8,13.4Z" fill="#1f8a5e"/></svg>
<div class="t nm" style="left:260px;top:1002px">G2_M</div>
<div class="t num" style="left:377px;width:120px;top:1002px">17,2</div>
<div class="t num" style="left:503px;width:120px;top:1002px">1523</div>
<div class="a" style="left:11px;top:1048px;width:617px;height:1px;background:#d3e6f2"></div>
<svg style="left:11px;top:1025px" width="21" height="21" viewBox="0 0 21 21"><polygon points="10.5,1 20,10.5 10.5,20 1,10.5" fill="none" stroke="#dddddd" stroke-width="1.4"/></svg>
<svg style="left:232px;top:1025px" width="22" height="18" viewBox="0 0 22 18"><ellipse cx="11" cy="9" rx="10" ry="7.6" fill="#f0fbf6" stroke="#444" stroke-width="1.6" stroke-dasharray="5.5 1.1"/><path d="M3,8 L6,5.6 L8.6,8.4 L5.6,10.6Z" fill="#1f8a5e"/><path d="M10,3.4 L13.2,2.4 L16,6 L13,7.8Z" fill="#1f8a5e"/><path d="M8,10 L11.8,8.4 L14,12.2 L11.2,14.6 L8,13.4Z" fill="#1f8a5e"/></svg>

<div class="a" style="left:376px;top:509px;width:1px;height:518px;background:#d3e6f2"></div>
<div class="a" style="left:502px;top:509px;width:1px;height:518px;background:#d3e6f2"></div>
<div class="a" style="left:628px;top:509px;width:1px;height:518px;background:#d3e6f2"></div>
<!-- scrollbar -->
<div class="a" style="left:629px;top:483px;width:26px;height:544px;background:#f0f0f0"></div>
<div class="a" style="left:631px;top:534px;width:22px;height:158px;background:#c6c6c6"></div>
<svg style="left:636px;top:517px" width="12" height="11"><path d="M1.5,8.5 L6,3.5 L10.5,8.5" stroke="#555" stroke-width="2.6" fill="none"/></svg>
<svg style="left:636px;top:1010px" width="12" height="11"><path d="M1.5,2.5 L6,7.5 L10.5,2.5" stroke="#555" stroke-width="2.6" fill="none"/></svg>
<!-- status area -->
<div class="a" style="left:8px;top:1029px;width:650px;height:41px;background:#efefef;border-top:1px solid #fafafa"></div>


<!-- ============ RIGHT WINDOW ============ -->
<div id="rw" class="a"></div>
<div class="a" style="left:666px;top:1px;width:602px;height:75px;background:#fff"></div>
<svg style="left:678px;top:11px" width="24" height="22" viewBox="0 0 24 22">
 <g style="filter:blur(0.35px)"><polygon points="7,1 0,20 14,22" fill="#6a6a6a"/><polygon points="7,1 14,22 19,18" fill="#a0a0a0"/>
 <polygon points="13,6 22,2 22,10 15,12" fill="#d83838"/><polygon points="3,11 8,12 7,16 2,15" fill="#c05060"/></g>
</svg>
<div class="t" style="left:707px;top:15px;font-size:18px;color:#7a7a7a;letter-spacing:-0.55px">C12_d0_Ctr-1.fcs: Cells/Single Cells/CellCyc...</div>
<div class="a" style="left:1086px;top:23px;width:15px;height:1px;background:#8a8a8a"></div>
<div class="a" style="left:1155px;top:16px;width:15px;height:15px;border:1px solid #8a8a8a"></div>
<svg style="left:1226px;top:16px" width="16" height="16"><path d="M0.5,0.5 L15.5,15.5 M15.5,0.5 L0.5,15.5" stroke="#8a8a8a" stroke-width="1.1"/></svg>
<div class="a" style="left:1238px;top:47px;width:30px;height:1px;background:#dddddd"></div>
<div class="t rm" style="left:672px;top:53px">File</div>
<div class="t rm" style="left:713px;top:53px">Edit</div>
<div class="t rm" style="left:756px;top:53px">Graph</div>
<div class="t rm" style="left:818px;top:53px">Display</div>
<div class="t rm" style="left:889px;top:53px">Go</div>
<div class="t rm" style="left:922px;top:53px">Help</div>
<div class="a" style="left:666px;top:76px;width:602px;height:1px;background:#a8a8a8"></div>

<div class="a" style="left:669px;top:81px;width:32px;height:33px;border:1px solid #8c8c8c;border-radius:5px;background:linear-gradient(#f4f4f6,#d8d6e6 70%,#c9c7dc)"></div>
<div class="a" style="left:705px;top:81px;width:32px;height:33px;border:1px solid #9a9a9a;border-radius:5px;background:linear-gradient(#fafafa,#ececec)"></div>
<div class="a" style="left:741px;top:81px;width:32px;height:33px;border:1px solid #d2d2d2;border-radius:5px;background:#f0f0f0"></div>
<div class="a" style="left:777px;top:81px;width:32px;height:33px;border:1px solid #d2d2d2;border-radius:5px;background:#f0f0f0"></div>
<div class="a" style="left:813px;top:81px;width:32px;height:33px;border:1px solid #d2d2d2;border-radius:5px;background:#f0f0f0"></div>
<div class="a" style="left:849px;top:81px;width:32px;height:33px;border:1px solid #d2d2d2;border-radius:5px;background:#f0f0f0"></div>
<div class="a" style="left:885px;top:81px;width:32px;height:33px;border:1px solid #d2d2d2;border-radius:5px;background:#f0f0f0"></div>
<div class="a" style="left:921px;top:81px;width:32px;height:33px;border:1px solid #d2d2d2;border-radius:5px;background:#f0f0f0"></div>
<div class="a" style="left:957px;top:81px;width:32px;height:33px;border:1px solid #d2d2d2;border-radius:5px;background:#f0f0f0"></div>

<svg style="left:678px;top:87px" width="16" height="22" viewBox="0 0 16 22"><polygon points="2,1 2,17 6,13 10,21 13,19.5 9,12 14.5,12" fill="#111"/></svg>
<svg style="left:710px;top:91px" width="23" height="14" viewBox="0 0 23 14"><path d="M1.5,1 V13 M21.5,1 V13 M1.5,7 H21.5" stroke="#111" stroke-width="2.2"/></svg>
<svg style="left:745px;top:87px" width="24" height="22" viewBox="0 0 24 22"><path d="M1.5,6 V16 M22.5,6 V16 M1.5,11 H22.5 M12,2 V21" stroke="#a8a8a8" stroke-width="1.4"/></svg>
<svg style="left:780px;top:89px" width="26" height="17" viewBox="0 0 26 17"><ellipse cx="13" cy="8.5" rx="11.5" ry="7" fill="none" stroke="#a0a0a0" stroke-width="1.3"/></svg>
<svg style="left:818px;top:88px" width="22" height="19" viewBox="0 0 22 19"><polygon points="2,1 20,1 13,9 20,18 2,17" fill="none" stroke="#a0a0a0" stroke-width="1.3"/></svg>
<svg style="left:853px;top:86px" width="24" height="24" viewBox="0 0 24 24"><path d="M4,22 L5,17 L18,3 L21,6 L8,20Z M16,5 L19,8 M5,17 L8,20" stroke="#a0a0a0" stroke-width="1.3" fill="none"/></svg>
<svg style="left:888px;top:88px" width="26" height="20" viewBox="0 0 26 20"><path d="M3,12 C1,7 6,4 12,5 C16,2 24,2 24,8 C24,13 17,15 11,15 C7,16 4,15 3,12Z" fill="none" stroke="#a0a0a0" stroke-width="1.3"/><circle cx="8" cy="11" r="2" fill="none" stroke="#a0a0a0"/><ellipse cx="17" cy="9" rx="4" ry="2.5" fill="none" stroke="#a0a0a0" transform="rotate(-30 17 9)"/></svg>
<svg style="left:925px;top:86px" width="24" height="24" viewBox="0 0 24 24"><path d="M2,15 H12 C17,15 21,10 22,8 M12,1 C11,8 9,14 9,23" stroke="#a0a0a0" stroke-width="1.3" fill="none"/></svg>
<svg style="left:961px;top:86px" width="24" height="24" viewBox="0 0 24 24"><path d="M2,16 L12,11 L22,14 M12,11 L14,23 M12,11 C13,7 13,4 12,1" stroke="#a0a0a0" stroke-width="1.3" fill="none"/></svg>

<div class="a" style="left:1043px;top:81px;width:33px;height:33px;border:1px solid #9a9a9a;border-radius:5px;background:linear-gradient(#fbfbfb,#eaeaea)"></div>
<div class="a" style="left:1079px;top:81px;width:33px;height:33px;border:1px solid #8c8c8c;border-radius:5px;background:linear-gradient(#fbfbfb,#eaeaea)"></div>
<div class="a" style="left:1123px;top:81px;width:33px;height:33px;border:1px solid #9a9a9a;border-radius:5px;background:linear-gradient(#fbfbfb,#eaeaea)"></div>
<div class="a" style="left:1159px;top:81px;width:33px;height:33px;border:1px solid #8c8c8c;border-radius:5px;background:linear-gradient(#fbfbfb,#eaeaea)"></div>
<div class="a" style="left:1195px;top:81px;width:33px;height:33px;border:1px solid #9a9a9a;border-radius:5px;background:linear-gradient(#fbfbfb,#eaeaea)"></div>
<div class="a" style="left:1231px;top:81px;width:33px;height:33px;border:1px solid #9a9a9a;border-radius:5px;background:linear-gradient(#fbfbfb,#eaeaea)"></div>

<svg style="left:1049px;top:88px" width="24" height="22" viewBox="0 0 24 22"><path d="M6,7 C12,2 20,5 20,17" stroke="#e05a3c" stroke-width="3.2" fill="none" stroke-linecap="round"/><polygon points="1,7 9,2 9,12" fill="#e05a3c"/></svg>
<svg style="left:1084px;top:88px" width="24" height="22" viewBox="0 0 24 22"><path d="M18,7 C12,2 4,5 4,17" stroke="#555" stroke-width="3.2" fill="none" stroke-linecap="round"/><polygon points="23,7 15,2 15,12" fill="#555"/></svg>
<svg style="left:1129px;top:88px" width="22" height="18"><polygon points="1,17 11,1 21,17" fill="#1f9a20"/></svg>
<svg style="left:1165px;top:90px" width="22" height="18"><polygon points="1,1 21,1 11,17" fill="#7c7c7c"/></svg>
<svg style="left:1204px;top:87px" width="18" height="22"><polygon points="17,1 17,21 1,11" fill="#1f9a20"/></svg>
<svg style="left:1240px;top:87px" width="18" height="22"><polygon points="1,1 1,21 17,11" fill="#1f9a20"/></svg>

<!-- breadcrumb -->
<svg style="left:677px;top:129px" width="9" height="12"><path d="M1.5,1 L7,6 L1.5,11" stroke="#333" stroke-width="1.8" fill="none"/></svg>
<svg style="left:707px;top:125px" width="14" height="20" viewBox="0 0 14 20"><rect x="0" y="0" width="14" height="2.5" fill="#888"/><path d="M2,2 V17 C2,19 12,19 12,17 V2" fill="#fff" stroke="#999" stroke-width="1.2"/><rect x="2.6" y="11" width="8.8" height="7.5" fill="#f0b400"/><rect x="2.6" y="14" width="8.8" height="4.5" fill="#e09000"/></svg>
<svg style="left:746px;top:129px" width="9" height="12"><path d="M1.5,1 L7,6 L1.5,11" stroke="#333" stroke-width="1.8" fill="none"/></svg>
<svg style="left:772px;top:126px" width="22" height="18" viewBox="0 0 22 18"><ellipse cx="11" cy="9" rx="10" ry="7.6" fill="#f0fbf6" stroke="#444" stroke-width="1.6" stroke-dasharray="5.5 1.1"/><path d="M3,8 L6,5.6 L8.6,8.4 L5.6,10.6Z" fill="#1f8a5e"/><path d="M10,3.4 L13.2,2.4 L16,6 L13,7.8Z" fill="#1f8a5e"/><path d="M8,10 L11.8,8.4 L14,12.2 L11.2,14.6 L8,13.4Z" fill="#1f8a5e"/></svg>
<div class="t bc" style="left:801px;top:129px">Cells</div>
<svg style="left:849px;top:129px" width="9" height="12"><path d="M1.5,1 L7,6 L1.5,11" stroke="#333" stroke-width="1.8" fill="none"/></svg>
<svg style="left:876px;top:126px" width="22" height="18" viewBox="0 0 22 18"><ellipse cx="11" cy="9" rx="10" ry="7.6" fill="#f0fbf6" stroke="#444" stroke-width="1.6" stroke-dasharray="5.5 1.1"/><path d="M3,8 L6,5.6 L8.6,8.4 L5.6,10.6Z" fill="#1f8a5e"/><path d="M10,3.4 L13.2,2.4 L16,6 L13,7.8Z" fill="#1f8a5e"/><path d="M8,10 L11.8,8.4 L14,12.2 L11.2,14.6 L8,13.4Z" fill="#1f8a5e"/></svg>
<div class="t bc" style="left:905px;top:129px">Single Cells</div>
<svg style="left:1005px;top:129px" width="9" height="12"><path d="M1.5,1 L7,6 L1.5,11" stroke="#333" stroke-width="1.8" fill="none"/></svg>
<svg style="left:1031px;top:126px" width="22" height="18" viewBox="0 0 22 18"><ellipse cx="11" cy="9" rx="10" ry="7.6" fill="#f0fbf6" stroke="#444" stroke-width="1.6" stroke-dasharray="5.5 1.1"/><path d="M3,8 L6,5.6 L8.6,8.4 L5.6,10.6Z" fill="#1f8a5e"/><path d="M10,3.4 L13.2,2.4 L16,6 L13,7.8Z" fill="#1f8a5e"/><path d="M8,10 L11.8,8.4 L14,12.2 L11.2,14.6 L8,13.4Z" fill="#1f8a5e"/></svg>
<div class="t bc" style="left:1060px;top:129px">CellCycle</div>
<svg style="left:1143px;top:129px" width="9" height="12"><path d="M1.5,1 L7,6 L1.5,11" stroke="#333" stroke-width="1.8" fill="none"/></svg>
<div class="t" style="left:804px;top:158px;font-size:14.5px;color:#d0603c;letter-spacing:0.57px">Warning: 8% of events are on the chart edges!</div>

<!-- Histogram side button -->
<div class="a" style="left:680px;top:240px;width:31px;height:330px;background:#c0c0c0;border:1px solid #8e8e8e;border-top-color:#e8e8e8;border-left-color:#e8e8e8"></div>
<div class="t" style="left:646px;top:396px;font-size:19px;color:#222;transform:rotate(-90deg);transform-origin:center;width:100px;text-align:center">Histogram</div>
<svg style="left:688px;top:545px" width="15" height="13"><polygon points="0.5,0.5 14.5,0.5 7.5,12.5" fill="#111"/></svg>

<svg style="left:0px;top:0px" width="1920" height="1080" viewBox="0 0 1920 1080">
<rect x="817" y="175" width="399" height="391" fill="#fff" stroke="#111" stroke-width="1.6"/>
<polygon points="820,566 820,192 823.4,559.2 827.6,559.2 836.4,558.5 841.7,559.2 848.7,553.9 854,550.4 862.8,549.3 868.1,546.8 875.1,538.7 880.4,534.5 883.9,525.7 889.2,506.3 894.5,499.3 898,488.7 903.3,464.1 906.8,453.5 910.4,425.4 912.1,411.3 914.9,393.7 917.4,383.1 919.9,347.9 922,323.2 925.5,288 927.3,252.8 929.7,235.2 932.5,215.8 935,235.2 936.8,265.1 940.3,268.7 942,281 943.8,316.2 945.6,358.5 948,393.7 950.8,418.3 954.4,446.5 957.9,474.6 963.2,502.8 968.5,527.5 973.7,545.1 979,553.9 986,557.4 993.1,559.2 1001.9,560.9 1015,566" fill="#9c9c9c" stroke="#111" stroke-width="2" stroke-linejoin="round"/>
<polyline points="1078,566 1090,559 1104,554 1111.6,556 1118.8,561 1128.5,566" fill="#9c9c9c" stroke="#111" stroke-width="2"/>
<line x1="819" y1="190" x2="819" y2="567" stroke="#111" stroke-width="3"/>
<line x1="817" y1="566.5" x2="1217" y2="566.5" stroke="#111" stroke-width="2.4"/>
<line x1="805" y1="566.0" x2="818" y2="566.0" stroke="#111" stroke-width="2.4"/>
<line x1="812" y1="552.5" x2="818" y2="552.5" stroke="#111" stroke-width="1.4"/>
<line x1="812" y1="539.1" x2="818" y2="539.1" stroke="#111" stroke-width="1.4"/>
<line x1="812" y1="525.6" x2="818" y2="525.6" stroke="#111" stroke-width="1.4"/>
<line x1="812" y1="512.2" x2="818" y2="512.2" stroke="#111" stroke-width="1.4"/>
<line x1="805" y1="498.7" x2="818" y2="498.7" stroke="#111" stroke-width="2.4"/>
<line x1="812" y1="485.2" x2="818" y2="485.2" stroke="#111" stroke-width="1.4"/>
<line x1="812" y1="471.8" x2="818" y2="471.8" stroke="#111" stroke-width="1.4"/>
<line x1="812" y1="458.3" x2="818" y2="458.3" stroke="#111" stroke-width="1.4"/>
<line x1="812" y1="444.9" x2="818" y2="444.9" stroke="#111" stroke-width="1.4"/>
<line x1="805" y1="431.4" x2="818" y2="431.4" stroke="#111" stroke-width="2.4"/>
<line x1="812" y1="417.9" x2="818" y2="417.9" stroke="#111" stroke-width="1.4"/>
<line x1="812" y1="404.5" x2="818" y2="404.5" stroke="#111" stroke-width="1.4"/>
<line x1="812" y1="391.0" x2="818" y2="391.0" stroke="#111" stroke-width="1.4"/>
<line x1="812" y1="377.6" x2="818" y2="377.6" stroke="#111" stroke-width="1.4"/>
<line x1="805" y1="364.1" x2="818" y2="364.1" stroke="#111" stroke-width="2.4"/>
<line x1="812" y1="350.6" x2="818" y2="350.6" stroke="#111" stroke-width="1.4"/>
<line x1="812" y1="337.2" x2="818" y2="337.2" stroke="#111" stroke-width="1.4"/>
<line x1="812" y1="323.7" x2="818" y2="323.7" stroke="#111" stroke-width="1.4"/>
<line x1="812" y1="310.3" x2="818" y2="310.3" stroke="#111" stroke-width="1.4"/>
<line x1="805" y1="296.8" x2="818" y2="296.8" stroke="#111" stroke-width="2.4"/>
<line x1="812" y1="283.3" x2="818" y2="283.3" stroke="#111" stroke-width="1.4"/>
<line x1="812" y1="269.9" x2="818" y2="269.9" stroke="#111" stroke-width="1.4"/>
<line x1="812" y1="256.4" x2="818" y2="256.4" stroke="#111" stroke-width="1.4"/>
<line x1="812" y1="243.0" x2="818" y2="243.0" stroke="#111" stroke-width="1.4"/>
<line x1="805" y1="229.5" x2="818" y2="229.5" stroke="#111" stroke-width="2.4"/>
<line x1="812" y1="216.0" x2="818" y2="216.0" stroke="#111" stroke-width="1.4"/>
<line x1="812" y1="202.6" x2="818" y2="202.6" stroke="#111" stroke-width="1.4"/>
<line x1="812" y1="189.1" x2="818" y2="189.1" stroke="#111" stroke-width="1.4"/>
<line x1="825.8" y1="566" x2="825.8" y2="572" stroke="#111" stroke-width="1.4"/>
<line x1="833.7" y1="566" x2="833.7" y2="572" stroke="#111" stroke-width="1.4"/>
<line x1="840.1" y1="566" x2="840.1" y2="572" stroke="#111" stroke-width="1.4"/>
<line x1="845.5" y1="566" x2="845.5" y2="572" stroke="#111" stroke-width="1.4"/>
<line x1="850.2" y1="566" x2="850.2" y2="572" stroke="#111" stroke-width="1.4"/>
<line x1="854.3" y1="566" x2="854.3" y2="572" stroke="#111" stroke-width="1.4"/>
<line x1="858.0" y1="566" x2="858.0" y2="576.5" stroke="#111" stroke-width="2.6"/>
<line x1="882.3" y1="566" x2="882.3" y2="572" stroke="#111" stroke-width="1.4"/>
<line x1="896.6" y1="566" x2="896.6" y2="572" stroke="#111" stroke-width="1.4"/>
<line x1="906.6" y1="566" x2="906.6" y2="572" stroke="#111" stroke-width="1.4"/>
<line x1="914.5" y1="566" x2="914.5" y2="572" stroke="#111" stroke-width="1.4"/>
<line x1="920.9" y1="566" x2="920.9" y2="572" stroke="#111" stroke-width="1.4"/>
<line x1="926.3" y1="566" x2="926.3" y2="572" stroke="#111" stroke-width="1.4"/>
<line x1="931.0" y1="566" x2="931.0" y2="572" stroke="#111" stroke-width="1.4"/>
<line x1="935.1" y1="566" x2="935.1" y2="572" stroke="#111" stroke-width="1.4"/>
<line x1="938.8" y1="566" x2="938.8" y2="576.5" stroke="#111" stroke-width="2.6"/>
<line x1="963.1" y1="566" x2="963.1" y2="572" stroke="#111" stroke-width="1.4"/>
<line x1="977.4" y1="566" x2="977.4" y2="572" stroke="#111" stroke-width="1.4"/>
<line x1="987.4" y1="566" x2="987.4" y2="572" stroke="#111" stroke-width="1.4"/>
<line x1="995.3" y1="566" x2="995.3" y2="572" stroke="#111" stroke-width="1.4"/>
<line x1="1001.7" y1="566" x2="1001.7" y2="572" stroke="#111" stroke-width="1.4"/>
<line x1="1007.1" y1="566" x2="1007.1" y2="572" stroke="#111" stroke-width="1.4"/>
<line x1="1011.8" y1="566" x2="1011.8" y2="572" stroke="#111" stroke-width="1.4"/>
<line x1="1015.9" y1="566" x2="1015.9" y2="572" stroke="#111" stroke-width="1.4"/>
<line x1="1019.6" y1="566" x2="1019.6" y2="576.5" stroke="#111" stroke-width="2.6"/>
<line x1="1043.9" y1="566" x2="1043.9" y2="572" stroke="#111" stroke-width="1.4"/>
<line x1="1058.2" y1="566" x2="1058.2" y2="572" stroke="#111" stroke-width="1.4"/>
<line x1="1068.2" y1="566" x2="1068.2" y2="572" stroke="#111" stroke-width="1.4"/>
<line x1="1076.1" y1="566" x2="1076.1" y2="572" stroke="#111" stroke-width="1.4"/>
<line x1="1082.5" y1="566" x2="1082.5" y2="572" stroke="#111" stroke-width="1.4"/>
<line x1="1087.9" y1="566" x2="1087.9" y2="572" stroke="#111" stroke-width="1.4"/>
<line x1="1092.6" y1="566" x2="1092.6" y2="572" stroke="#111" stroke-width="1.4"/>
<line x1="1096.7" y1="566" x2="1096.7" y2="572" stroke="#111" stroke-width="1.4"/>
<line x1="1100.4" y1="566" x2="1100.4" y2="576.5" stroke="#111" stroke-width="2.6"/>
<line x1="1124.7" y1="566" x2="1124.7" y2="572" stroke="#111" stroke-width="1.4"/>
<line x1="1139.0" y1="566" x2="1139.0" y2="572" stroke="#111" stroke-width="1.4"/>
<line x1="1149.0" y1="566" x2="1149.0" y2="572" stroke="#111" stroke-width="1.4"/>
<line x1="1156.9" y1="566" x2="1156.9" y2="572" stroke="#111" stroke-width="1.4"/>
<line x1="1163.3" y1="566" x2="1163.3" y2="572" stroke="#111" stroke-width="1.4"/>
<line x1="1168.7" y1="566" x2="1168.7" y2="572" stroke="#111" stroke-width="1.4"/>
<line x1="1173.4" y1="566" x2="1173.4" y2="572" stroke="#111" stroke-width="1.4"/>
<line x1="1177.5" y1="566" x2="1177.5" y2="572" stroke="#111" stroke-width="1.4"/>
<line x1="1181.2" y1="566" x2="1181.2" y2="576.5" stroke="#111" stroke-width="2.6"/>
<line x1="1205.5" y1="566" x2="1205.5" y2="572" stroke="#111" stroke-width="1.4"/>
<path d="M819,420 H1042 M1042,412 V428 M1042,438 H1216 M1042,430 V447 M1215,431 V446" stroke="#111" stroke-width="2.2" fill="none"/>
</svg>
<div class="t ax" style="left:740px;width:58px;text-align:right;top:553px">0</div>
<div class="t ax" style="left:740px;width:58px;text-align:right;top:495px">50</div>
<div class="t ax" style="left:740px;width:58px;text-align:right;top:427px">100</div>
<div class="t ax" style="left:740px;width:58px;text-align:right;top:360px">150</div>
<div class="t ax" style="left:740px;width:58px;text-align:right;top:293px">200</div>
<div class="t ax" style="left:740px;width:58px;text-align:right;top:225px">250</div>
<div class="t ax" style="left:856px;top:594px">10</div><div class="t ax" style="left:874px;top:580px">1</div>
<div class="t ax" style="left:937px;top:594px">10</div><div class="t ax" style="left:955px;top:580px">2</div>
<div class="t ax" style="left:1018px;top:594px">10</div><div class="t ax" style="left:1036px;top:580px">3</div>
<div class="t ax" style="left:1098px;top:594px">10</div><div class="t ax" style="left:1116px;top:580px">4</div>
<div class="t ax" style="left:1179px;top:594px">10</div><div class="t ax" style="left:1197px;top:580px">5</div>

<div class="t ax" style="left:824px;top:193px">M-</div>
<div class="t ax" style="left:824px;top:215px">98,0</div>
<div class="t ax" style="left:1171px;top:193px">M</div>
<div class="t ax" style="left:1152px;top:215px">2,05</div>

<div class="t mono" style="left:668px;top:634px;color:#777">(</div><div class="t mono" style="left:703px;top:634px">643,</div><div class="t mono" style="left:748px;top:634px">103)</div>

<div class="a" style="left:683px;top:659px;width:34px;height:35px;border:2px solid #a0a0a0;border-radius:6px;background:#fafafa"></div>
<svg style="left:688px;top:664px" width="26" height="26" viewBox="0 0 26 26"><rect x="1.5" y="1.5" width="13" height="15" fill="#dfe8ee" stroke="#5a4a50" stroke-width="1.6"/><rect x="7.5" y="8.5" width="14" height="15" fill="#eef3f6" stroke="#4a4a4a" stroke-width="1.6"/><path d="M5,5 C3,9 4,13 7,15" stroke="#3a7aa8" stroke-width="1.6" fill="none"/><path d="M11,12 C9,16 10,20 13,22" stroke="#3a7aa8" stroke-width="1.6" fill="none"/><circle cx="12" cy="7" r="4" fill="#4aaa2a" stroke="#1a5a1a" stroke-width="1"/><circle cx="18" cy="14" r="4.5" fill="#4aaa2a" stroke="#1a5a1a" stroke-width="1"/><ellipse cx="14.5" cy="18.5" rx="1.8" ry="3" fill="#e07a30"/></svg>
<div class="a" style="left:801px;top:661px;width:329px;height:31px;background:#c0c0c0;border:1px solid #8e8e8e;box-shadow:inset 1px 1px 0 #f4f4f4"></div>
<div class="t" style="left:801px;width:316px;text-align:center;top:668px;font-size:17px;color:#111;letter-spacing:0.2px">Alexa555-A</div>
<svg style="left:1104px;top:670px" width="15" height="14"><polygon points="0.5,0.5 14.5,0.5 7.5,13.5" fill="#111"/></svg>
<div class="a" style="left:1147px;top:659px;width:39px;height:37px;border:3px solid #8d4a2b;background:#fff;box-shadow:inset 0 0 0 1px #c08a6a"></div>
<div class="t" style="left:1147px;width:39px;text-align:center;top:658px;font-family:'Liberation Serif',serif;font-weight:bold;font-size:39px;color:#111">T</div>

<div class="a" style="left:670px;top:707px;width:593px;height:99px;border:1px solid #dedede;border-left-color:#e6e6e6;box-shadow:inset 1px 1px 0 #fafafa"></div>
<div class="a" style="left:677px;top:702px;width:118px;height:16px;background:#f0f0f0"></div>
<div class="t" style="left:680px;top:703px;font-size:15px;font-weight:bold;color:#3434e0;letter-spacing:0.25px">Color Map Axis</div>
<div class="a" style="left:705px;top:730px;width:20px;height:20px;border:1px solid #333;background:#fff"></div>
<div class="t" style="left:731px;top:733px;font-size:15px;color:#333">Color Axis</div>
<div class="a" style="left:845px;top:723px;width:270px;height:31px;background:linear-gradient(90deg,#0010f0 0%,#0a5a9a 15%,#0a9a50 25%,#00ff00 33%,#c0ff00 61%,#ffff00 67%,#ff8800 84%,#ff0000 100%)"></div>
<div class="a" style="left:699px;top:761px;width:427px;height:32px;background:#c0c0c0;border:1px solid #8e8e8e;box-shadow:inset 1px 1px 0 #f4f4f4"></div>
<div class="t" style="left:699px;width:427px;text-align:center;top:771px;font-size:16px;color:#222;letter-spacing:0.3px">Alexa488-A</div>

<div class="a" style="left:682px;top:827px;width:571px;height:29px;border:1px solid #bdbdbd;border-bottom-color:#a9b8b8;border-radius:3px;background:linear-gradient(#f8f8f8,#ececec 50%,#f3f5f5)"></div>
<div class="t" style="left:716px;top:835px;font-size:14.5px;font-weight:bold;color:#222;letter-spacing:0.6px">Options</div>
<svg style="left:1222px;top:834px" width="12" height="14"><path d="M1,1.5 L6,5.5 L11,1.5 M1,7 L6,11 L11,7" stroke="#222" stroke-width="1.8" fill="none"/></svg>
<div class="a" style="left:682px;top:859px;width:571px;height:29px;border:1px solid #bdbdbd;border-bottom-color:#a9b8b8;border-radius:3px;background:linear-gradient(#f8f8f8,#ececec 50%,#f3f5f5)"></div>
<div class="t" style="left:716px;top:867px;font-size:14.5px;font-weight:bold;color:#222;letter-spacing:0.6px">Active Gate &nbsp;- &nbsp;2,05 M</div>
<svg style="left:1222px;top:866px" width="12" height="14"><path d="M1,1.5 L6,5.5 L11,1.5 M1,7 L6,11 L11,7" stroke="#222" stroke-width="1.8" fill="none"/></svg>
<div class="a" style="left:682px;top:890px;width:571px;height:29px;border:1px solid #bdbdbd;border-bottom-color:#a9b8b8;border-radius:3px;background:linear-gradient(#f8f8f8,#ececec 50%,#f3f5f5)"></div>
<div class="t" style="left:716px;top:898px;font-size:14.5px;font-weight:bold;color:#222;letter-spacing:0.6px">Statistics &nbsp;- &nbsp;Count: 8459 / 8484</div>
<svg style="left:1222px;top:897px" width="12" height="14"><path d="M1,1.5 L6,5.5 L11,1.5 M1,7 L6,11 L11,7" stroke="#222" stroke-width="1.8" fill="none"/></svg>

<div class="t" style="left:971px;top:898px;font-size:14.5px;font-weight:bold;color:#222;letter-spacing:0.6px">99,7</div>
<svg style="left:686px;top:832px" width="20" height="20" viewBox="0 0 20 20"><rect x="1" y="1" width="17" height="17" fill="#d8e4ea"/><circle cx="8" cy="7" r="4" fill="none" stroke="#7a8c9a" stroke-width="2"/><path d="M10,10 L17,17" stroke="#7a8c9a" stroke-width="3"/></svg>
<svg style="left:686px;top:864px" width="20" height="20" viewBox="0 0 20 20"><rect x="1" y="1" width="18" height="18" fill="#e8f0f0"/><path d="M2,2 V18 H18" stroke="#5a8a96" stroke-width="2.5" fill="none"/><rect x="5" y="3" width="12" height="11" fill="#9fc2c8"/><rect x="3" y="15" width="6" height="3" fill="#e0b090"/></svg>
<div class="t" style="left:688px;top:891px;font-family:'Liberation Serif',serif;font-size:22px;color:#2a7f8e">&Sigma;</div>

</body></html>
